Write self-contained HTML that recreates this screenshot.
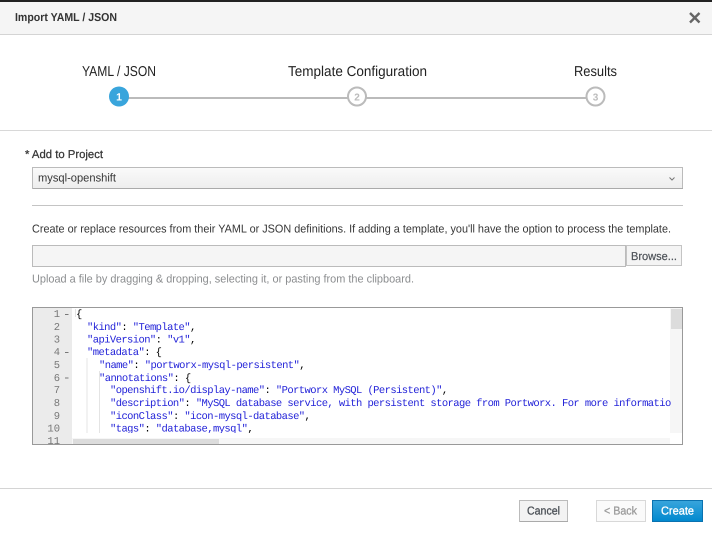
<!DOCTYPE html>
<html><head><meta charset="utf-8">
<style>
html,body{margin:0;padding:0;background:#fff;width:712px;height:535px;overflow:hidden}
svg{display:block;filter:blur(.3px)}
text{font-family:"Liberation Sans",sans-serif;text-rendering:geometricPrecision}
.m text{font-family:"Liberation Mono",monospace;font-size:10.5px;letter-spacing:-.58px;fill:#2323d8;white-space:pre}
.g text{font-family:"Liberation Mono",monospace;font-size:10.5px;fill:#777;text-anchor:end}
</style></head><body>
<svg width="712" height="535" viewBox="0 0 712 535" xmlns="http://www.w3.org/2000/svg">
<defs>
<linearGradient id="sel" x1="0" y1="0" x2="0" y2="1"><stop offset="0" stop-color="#fafafa"/><stop offset="1" stop-color="#ededed"/></linearGradient>
<linearGradient id="blue" x1="0" y1="0" x2="0" y2="1"><stop offset="0" stop-color="#39a5dc"/><stop offset="1" stop-color="#0088ce"/></linearGradient>
</defs>
<rect width="712" height="535" fill="#fff"/>
<!-- header -->
<rect x="0" y="0" width="712" height="2" fill="#222"/>
<rect x="0" y="2" width="712" height="32" fill="#f5f5f5"/>
<rect x="0" y="34" width="712" height="1" fill="#d4d4d4"/>
<text x="15" y="21" font-size="11.500" font-weight="bold" fill="#333" textLength="102" lengthAdjust="spacingAndGlyphs">Import YAML / JSON</text>
<path d="M690 13L699.500 22.500M699.500 13L690 22.500" stroke="#666" stroke-width="2.400" fill="none"/>
<!-- steps -->
<text x="82" y="76" font-size="14.300" fill="#222" textLength="74" lengthAdjust="spacingAndGlyphs">YAML / JSON</text>
<text x="288" y="76" font-size="14.300" fill="#222" textLength="139" lengthAdjust="spacingAndGlyphs">Template Configuration</text>
<text x="574" y="76" font-size="14.300" fill="#222" textLength="43" lengthAdjust="spacingAndGlyphs">Results</text>
<rect x="125" y="97" width="464" height="2" fill="#bbb"/>
<circle cx="119" cy="96.500" r="10" fill="#39a5dc"/>
<text x="119" y="100.500" font-size="10.500" font-weight="bold" fill="#fff" text-anchor="middle">1</text>
<circle cx="357" cy="96.500" r="9" fill="#fff" stroke="#bbb" stroke-width="2"/>
<text x="357" y="100.500" font-size="10" font-weight="bold" fill="#bbb" text-anchor="middle">2</text>
<circle cx="595.500" cy="96.500" r="9" fill="#fff" stroke="#bbb" stroke-width="2"/>
<text x="595.500" y="100.500" font-size="10" font-weight="bold" fill="#bbb" text-anchor="middle">3</text>
<rect x="0" y="130" width="712" height="1" fill="#d8d8d8"/>
<!-- form -->
<text x="25" y="158" font-size="11.500" fill="#363636" stroke="#363636" stroke-width=".25" textLength="78" lengthAdjust="spacingAndGlyphs">* Add to Project</text>
<rect x="32.500" y="167.500" width="650" height="21" fill="url(#sel)" stroke="#bbb"/>
<rect x="33" y="188" width="650" height="1" fill="#aaa"/>
<text x="38" y="181.500" font-size="11.500" fill="#363636" textLength="78" lengthAdjust="spacingAndGlyphs">mysql-openshift</text>
<path d="M669.500 177.500L672 180L674.500 177.500" stroke="#777" stroke-width="1" fill="none"/>
<rect x="32" y="205" width="651" height="1" fill="#c4c4c4"/>
<text x="32" y="232.500" font-size="11.500" fill="#363636" textLength="639" lengthAdjust="spacingAndGlyphs">Create or replace resources from their YAML or JSON definitions. If adding a template, you'll have the option to process the template.</text>
<rect x="32.500" y="245.500" width="593" height="21" fill="#f5f5f5" stroke="#bbb"/>
<rect x="626.500" y="245.500" width="55" height="20" fill="#f4f4f4" stroke="#c4c4c4"/>
<text x="631" y="260" font-size="11.500" fill="#4d5258" stroke="#4d5258" stroke-width=".2" textLength="46" lengthAdjust="spacingAndGlyphs">Browse...</text>
<text x="32" y="282.500" font-size="11.500" fill="#8b8d8f" textLength="382" lengthAdjust="spacingAndGlyphs">Upload a file by dragging &amp; dropping, selecting it, or pasting from the clipboard.</text>
<!-- editor -->
<rect x="32" y="307" width="651" height="138" fill="#fff"/>
<rect x="33" y="308" width="39" height="137" fill="#ebebeb"/>
<rect x="670" y="308" width="12" height="125" fill="#f6f6f6"/>
<rect x="671" y="309" width="11" height="20" fill="#dcdcdc"/>
<g class="g">
<text x="60" y="317">1</text><text x="60" y="330">2</text><text x="60" y="342.500">3</text><text x="60" y="355">4</text><text x="60" y="368">5</text><text x="60" y="381">6</text><text x="60" y="393">7</text><text x="60" y="406">8</text><text x="60" y="419">9</text><text x="60" y="431.500">10</text><text x="60" y="444">11</text>
</g>
<path d="M65 314.500h3.500M65 352.500h3.500M65 378h3.500" stroke="#777" stroke-width="1"/>
<path d="M75.500 309v8M87 358v75M99.500 371v62" stroke="#e4e4e4" stroke-width="1"/>
<g class="m">
<text x="76" y="317" style="fill:#000">{</text>
<text x="87" y="330">"kind"<tspan fill="#000" style="fill:#000">: </tspan>"Template"<tspan style="fill:#000">,</tspan></text>
<text x="87" y="342.500">"apiVersion"<tspan style="fill:#000">: </tspan>"v1"<tspan style="fill:#000">,</tspan></text>
<text x="87" y="355">"metadata"<tspan style="fill:#000">: {</tspan></text>
<text x="99" y="368">"name"<tspan style="fill:#000">: </tspan>"portworx-mysql-persistent"<tspan style="fill:#000">,</tspan></text>
<text x="99" y="381">"annotations"<tspan style="fill:#000">: {</tspan></text>
<text x="110" y="393">"openshift.io/display-name"<tspan style="fill:#000">: </tspan>"Portworx MySQL (Persistent)"<tspan style="fill:#000">,</tspan></text>
<text x="110" y="406">"description"<tspan style="fill:#000">: </tspan>"MySQL database service, with persistent storage from Portworx. For more informatio</text>
<text x="110" y="419">"iconClass"<tspan style="fill:#000">: </tspan>"icon-mysql-database"<tspan style="fill:#000">,</tspan></text>
<text x="110" y="431.500">"tags"<tspan style="fill:#000">: </tspan>"database,mysql"<tspan style="fill:#000">,</tspan></text>
</g>
<rect x="72" y="433" width="610" height="5" fill="#fff"/>
<rect x="72" y="438" width="598" height="7" fill="#f6f6f6"/>
<rect x="73" y="439" width="146" height="6" fill="#dcdcdc"/>
<rect x="32.500" y="307.500" width="650" height="137" fill="none" stroke="#999"/>
<!-- footer -->
<rect x="0" y="488" width="712" height="1" fill="#d4d4d4"/>
<rect x="519.500" y="500.500" width="48" height="21" fill="#f3f3f3" stroke="#bbb"/>
<rect x="520" y="521" width="48" height="1" fill="#aaa"/>
<text x="527" y="514.500" font-size="11.500" fill="#4d5258" stroke="#4d5258" stroke-width=".3" textLength="33" lengthAdjust="spacingAndGlyphs">Cancel</text>
<rect x="596.500" y="500.500" width="49" height="21" fill="#fafafa" stroke="#d8d8d8"/>
<text x="604" y="514.500" font-size="11.500" fill="#9c9c9c" stroke="#9c9c9c" stroke-width=".3" textLength="33" lengthAdjust="spacingAndGlyphs">&lt; Back</text>
<rect x="652.500" y="500.500" width="50" height="21" fill="url(#blue)" stroke="#0a72b0"/>
<text x="661" y="514.500" font-size="11.500" fill="#fff" stroke="#fff" stroke-width=".3" textLength="33" lengthAdjust="spacingAndGlyphs">Create</text>
</svg>
</body></html>
